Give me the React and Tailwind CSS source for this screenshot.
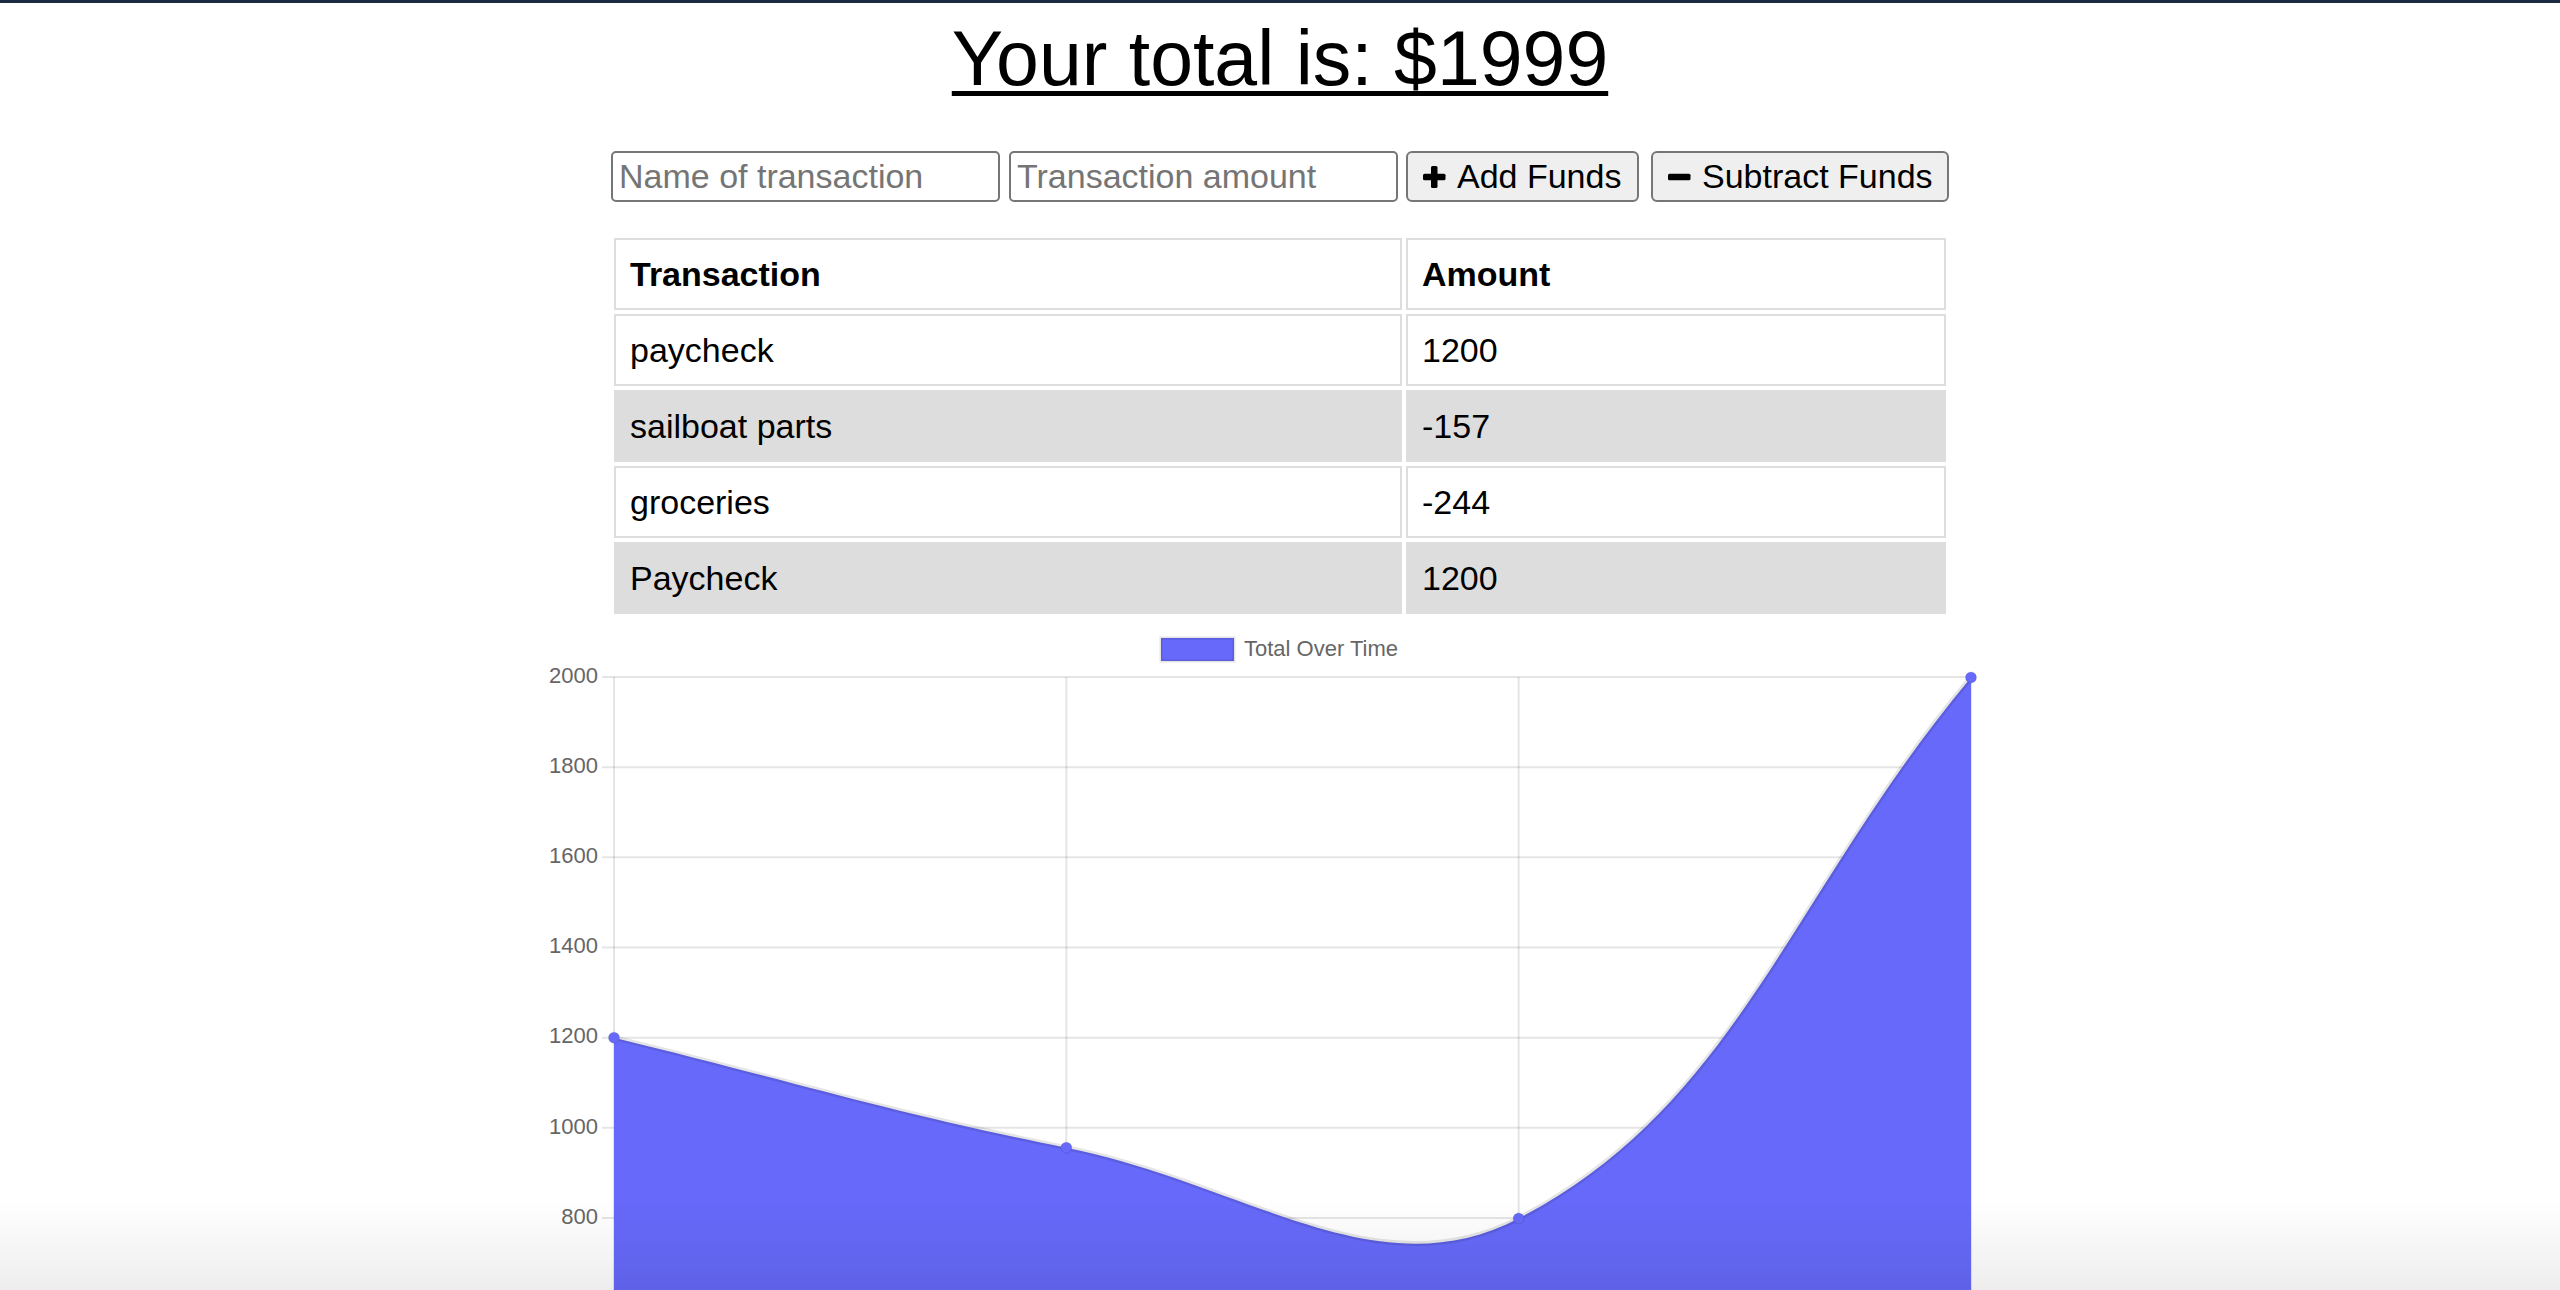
import React from 'react';

const FONT = { fontFamily: '"Liberation Sans", Arial, sans-serif' };

// running total, oldest first (the table lists newest first)
const totals = [1200, 956, 799, 1999];
const ticks = [2000, 1800, 1600, 1400, 1200, 1000, 800];

const LEFT = 74;
const STEP = 452.33;
const TOP = 54;
const PER_UNIT = 0.4508;
const BOTTOM = 700;

const px = (i) => LEFT + i * STEP;
const py = (v) => TOP + (2000 - v) * PER_UNIT;

function controlPoints(p0, p1, p2, t) {
  const d01 = Math.hypot(p1.x - p0.x, p1.y - p0.y);
  const d12 = Math.hypot(p2.x - p1.x, p2.y - p1.y);
  let s01 = d01 / (d01 + d12);
  let s12 = d12 / (d01 + d12);
  if (isNaN(s01)) s01 = 0;
  if (isNaN(s12)) s12 = 0;
  const fa = t * s01;
  const fb = t * s12;
  return {
    prev: { x: p1.x - fa * (p2.x - p0.x), y: p1.y - fa * (p2.y - p0.y) },
    next: { x: p1.x + fb * (p2.x - p0.x), y: p1.y + fb * (p2.y - p0.y) },
  };
}

function buildLine() {
  const pts = totals.map((v, i) => ({ x: px(i), y: py(v) }));
  const cps = pts.map((p, i) =>
    controlPoints(pts[i - 1] || p, p, pts[i + 1] || p, 0.4)
  );
  let d = `M ${pts[0].x} ${pts[0].y}`;
  for (let i = 1; i < pts.length; i++) {
    const a = cps[i - 1].next;
    const b = cps[i].prev;
    d += ` C ${a.x} ${a.y} ${b.x} ${b.y} ${pts[i].x} ${pts[i].y}`;
  }
  return { pts, d };
}

function Chart() {
  const { pts, d } = buildLine();
  const last = pts[pts.length - 1];
  const fill = `${d} L ${last.x} ${BOTTOM} L ${pts[0].x} ${BOTTOM} Z`;

  return (
    <svg width="1480" height="700" className="block shrink-0" style={FONT}>
      {/* legend */}
      <rect x="621" y="15" width="73" height="23" fill="#6669f9" stroke="rgba(0,0,0,0.1)" strokeWidth="3" />
      <text x="704" y="27" fontSize="22" fill="#666" dominantBaseline="middle">
        Total Over Time
      </text>

      {/* grid */}
      {ticks.map((t) => (
        <g key={t}>
          <line x1={LEFT - 12} x2={px(3)} y1={py(t)} y2={py(t)} stroke="rgba(0,0,0,0.1)" strokeWidth="2" />
          <text x={LEFT - 16} y={py(t)} fontSize="22" fill="#666" textAnchor="end" dominantBaseline="middle">
            {t}
          </text>
        </g>
      ))}
      <line x1={LEFT - 12} x2={px(3)} y1={py(600)} y2={py(600)} stroke="rgba(0,0,0,0.1)" strokeWidth="2" />
      {totals.map((_, i) => (
        <line key={i} x1={px(i)} x2={px(i)} y1={TOP} y2={BOTTOM} stroke="rgba(0,0,0,0.1)" strokeWidth="2" />
      ))}

      {/* data */}
      <path d={fill} fill="#6669f9" />
      <path d={d} fill="none" stroke="rgba(0,0,0,0.1)" strokeWidth="5" />
      {pts.map((p, i) => (
        <circle key={i} cx={p.x} cy={p.y} r="5.5" fill="#6669f9" stroke="rgba(0,0,0,0.1)" strokeWidth="1" />
      ))}
    </svg>
  );
}

function PlusIcon() {
  return (
    <svg width="24" height="24" viewBox="0 0 24 24" className="shrink-0">
      <rect x="9" y="1" width="6.5" height="22" rx="1.5" fill="#000" />
      <rect x="1" y="8.75" width="22.5" height="6.5" rx="1.5" fill="#000" />
    </svg>
  );
}

function MinusIcon() {
  return (
    <svg width="24" height="24" viewBox="0 0 24 24" className="shrink-0">
      <rect x="1" y="8.75" width="22.5" height="6.5" rx="1.5" fill="#000" />
    </svg>
  );
}

const rows = [
  { name: 'paycheck', value: '1200' },
  { name: 'sailboat parts', value: '-157' },
  { name: 'groceries', value: '-244' },
  { name: 'Paycheck', value: '1200' },
];

export default function App() {
  return (
    <div className="relative h-[1290px] overflow-hidden bg-white text-black" style={FONT}>
      <div className="h-[3px] bg-[#1c2a44]" />

      <h1 className="mt-[11px] text-center text-[77px] leading-[88px] font-normal underline decoration-[5px] underline-offset-[6px]">
        Your total is: $1999
      </h1>

      {/* form row */}
      <div className="mt-[49px] flex justify-center items-center text-[34px]">
        <input
          type="text"
          placeholder="Name of transaction"
          className="w-[389px] h-[51px] px-[6px] border-2 border-[#767676] rounded-[5px] placeholder:text-[#757575] outline-none"
        />
        <input
          type="number"
          placeholder="Transaction amount"
          className="ml-[9px] w-[389px] h-[51px] px-[6px] border-2 border-[#767676] rounded-[5px] placeholder:text-[#757575] outline-none"
        />
        <button className="ml-[8px] w-[233px] h-[51px] flex items-center gap-[11px] px-[14px] bg-[#efefef] border-2 border-[#767676] rounded-[6px]">
          <PlusIcon />
          <span>Add Funds</span>
        </button>
        <button className="ml-[12px] w-[298px] h-[51px] flex items-center gap-[11px] px-[14px] bg-[#efefef] border-2 border-[#767676] rounded-[6px]">
          <MinusIcon />
          <span>Subtract Funds</span>
        </button>
      </div>

      {/* transactions */}
      <div className="mt-[32px] flex justify-center">
        <table className="border-separate border-spacing-[4px] text-[34px]">
          <thead>
            <tr>
              <th className="w-[788px] h-[72px] border-2 border-[#dddddd] px-[14px] text-left font-bold">Transaction</th>
              <th className="w-[540px] h-[72px] border-2 border-[#dddddd] px-[14px] text-left font-bold">Amount</th>
            </tr>
          </thead>
          <tbody>
            {rows.map((r, i) => (
              <tr key={i} className={i % 2 === 1 ? 'bg-[#dddddd]' : 'bg-white'}>
                <td className="h-[72px] border-2 border-[#dddddd] px-[14px]">{r.name}</td>
                <td className="h-[72px] border-2 border-[#dddddd] px-[14px]">{r.value}</td>
              </tr>
            ))}
          </tbody>
        </table>
      </div>

      {/* chart */}
      <div className="mt-[5px] flex justify-center">
        <Chart />
      </div>

      <div className="pointer-events-none absolute inset-x-0 bottom-0 h-[90px] bg-gradient-to-b from-transparent to-black/[0.07]" />
    </div>
  );
}
